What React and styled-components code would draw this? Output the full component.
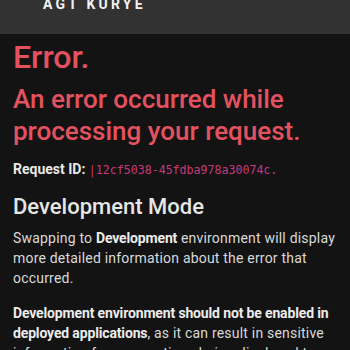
import React from "react";
import styled, { createGlobalStyle } from "styled-components";

const Global = createGlobalStyle`
  html, body {
    margin: 0;
    padding: 0;
    background: #131313;
    color: #dedede;
    font-family: Roboto, "Noto Sans", sans-serif;
    overflow: hidden;
  }
`;

export default function App() {
  return (
    <>
      <Global />
      <Header>
        <Brand>AGT KURYE</Brand>
      </Header>
      <Main>
        <Title>Error.</Title>
        <Subtitle>An error occurred while processing your request.</Subtitle>
        <RequestLine>
          <strong>Request ID:</strong> <Code>|12cf5038-45fdba978a30074c.</Code>
        </RequestLine>
        <Section>Development Mode</Section>
        <Text>
          Swapping to <strong>Development</strong> environment will display more
          detailed information about the error that occurred.
        </Text>
        <Text>
          <strong>
            Development environment should not be enabled in deployed
            applications
          </strong>
          , as it can result in sensitive information from exceptions being
          displayed to end users.
        </Text>
      </Main>
    </>
  );
}

const Header = styled.header`
  height: 34px;
  background: #323232;
  padding-left: 43px;
  overflow: hidden;
`;

const Brand = styled.div`
  font-size: 14px;
  line-height: 14px;
  font-weight: 700;
  letter-spacing: 3.2px;
  color: #f2f2f2;
  margin-top: -3px;
`;

const Main = styled.main`
  padding: 0 13px;
`;

const Title = styled.h1`
  margin: 4px 0 0;
  font-size: 32px;
  line-height: 1.2;
  font-weight: 500;
  color: #e4525f;
`;

const Subtitle = styled.h2`
  margin: 8px 0 0;
  font-size: 26px;
  line-height: 1.2;
  font-weight: 500;
  color: #e4525f;
`;

const RequestLine = styled.p`
  margin: 12px 0 0;
  font-size: 14px;
  line-height: 20px;
  strong {
    font-weight: 700;
    color: #e8e8e8;
  }
`;

const Code = styled.code`
  font-family: "DejaVu Sans Mono", monospace;
  font-size: 11.6px;
  color: #c53a7d;
`;

const Section = styled.h3`
  margin: 14px 0 0;
  font-size: 22px;
  line-height: 1.2;
  font-weight: 500;
  color: #e6e6e6;
`;

const Text = styled.p`
  margin: 8px 0 0;
  font-size: 14px;
  line-height: 20px;
  letter-spacing: 0.2px;
  color: #d9d9d9;
  strong {
    font-weight: 700;
    letter-spacing: -0.15px;
    color: #ececec;
  }
  & + & {
    margin-top: 15px;
  }
`;
